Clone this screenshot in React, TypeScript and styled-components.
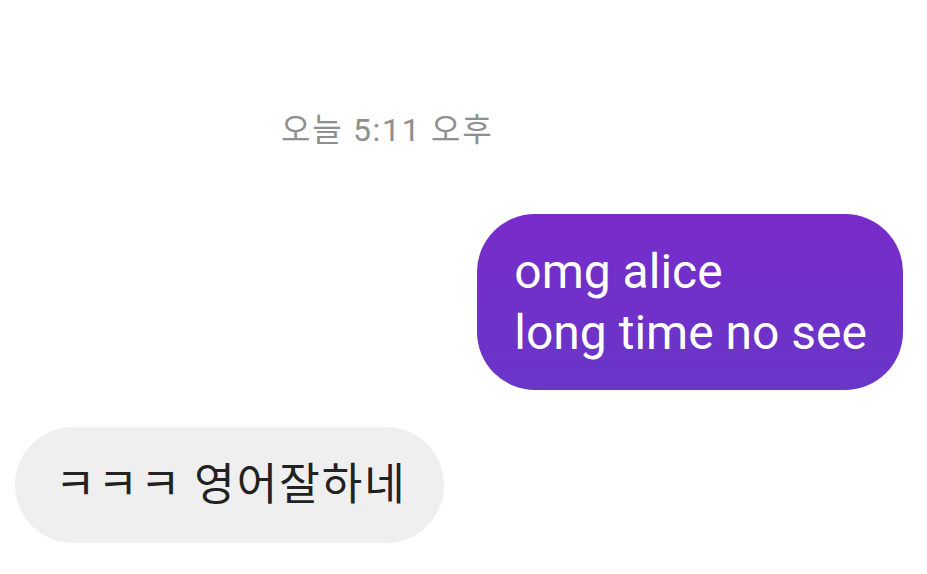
import React from "react";
import styled, { createGlobalStyle } from "styled-components";

const GlobalStyle = createGlobalStyle`
  html, body {
    margin: 0;
    padding: 0;
    background: #ffffff;
  }
  body {
    font-family: Roboto, "Noto Sans CJK KR", sans-serif;
  }
`;

type Message = {
  id: number;
  mine: boolean;
  lines: string[];
};

const messages: Message[] = [
  { id: 1, mine: true, lines: ["omg alice", "long time no see"] },
  { id: 2, mine: false, lines: ["ㅋㅋㅋ 영어잘하네"] },
];

function App() {
  return (
    <>
      <GlobalStyle />
      <Chat>
        <Stamp>오늘 5:11 오후</Stamp>
        {messages.map((m) => (
          <Row key={m.id} $mine={m.mine}>
            <Bubble $mine={m.mine}>
              {m.lines.map((line, i) => (
                <Line key={i}>{line}</Line>
              ))}
            </Bubble>
          </Row>
        ))}
      </Chat>
    </>
  );
}

export default App;

const Chat = styled.div`
  width: 927px;
  height: 574px;
  overflow: hidden;
  display: flex;
  flex-direction: column;
  padding: 108px 24px 0 15px;
  box-sizing: border-box;
`;

const Stamp = styled.div`
  align-self: flex-start;
  margin-left: 266px;
  font-family: Roboto, "Noto Sans CJK KR", sans-serif;
  font-size: 32px;
  letter-spacing: 1.7px;
  line-height: 44px;
  color: #8f8f8f;
  margin-bottom: 62px;
`;

const Row = styled.div<{ $mine: boolean }>`
  display: flex;
  justify-content: ${(p) => (p.$mine ? "flex-end" : "flex-start")};
  margin-bottom: ${(p) => (p.$mine ? "37px" : "0")};
`;

const Bubble = styled.div<{ $mine: boolean }>`
  display: flex;
  flex-direction: column;
  box-sizing: border-box;
  white-space: nowrap;
  border-radius: 58px;
  background: ${(p) =>
    p.$mine ? "linear-gradient(180deg, #782bc9 0%, #6936c9 100%)" : "#efefef"};
  color: ${(p) => (p.$mine ? "#ffffff" : "#222222")};
  padding: ${(p) => (p.$mine ? "27px 36px 27px 37px" : "24px 37px 32px 40px")};
  font-size: ${(p) => (p.$mine ? "48px" : "44px")};
  letter-spacing: ${(p) => (p.$mine ? "0" : "2px")};
  line-height: ${(p) => (p.$mine ? "61px" : "60px")};
  font-family: ${(p) =>
    p.$mine
      ? `Roboto, "Noto Sans CJK KR", sans-serif`
      : `"Noto Sans CJK KR", sans-serif`};
`;

const Line = styled.span`
  display: block;
`;
